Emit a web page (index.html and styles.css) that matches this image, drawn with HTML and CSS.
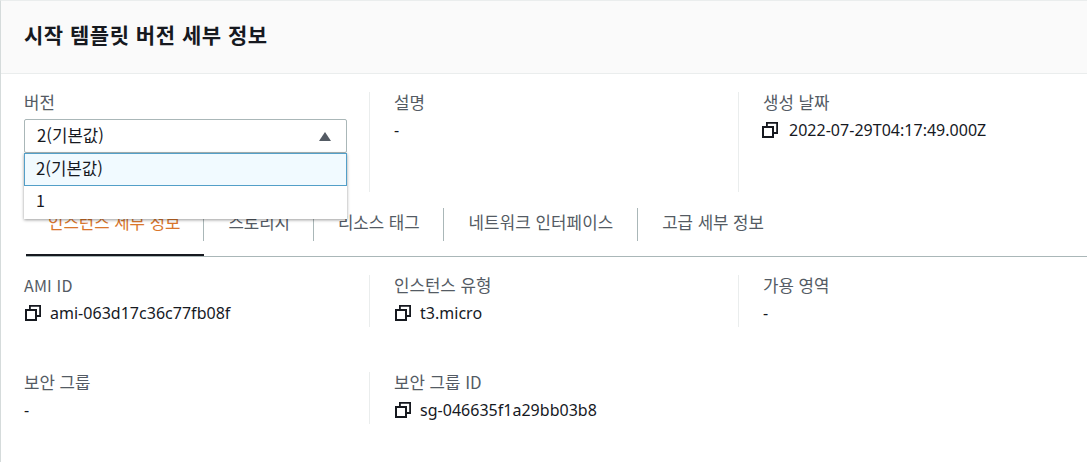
FILE: index.html
```html
<!DOCTYPE html>
<html lang="ko">
<head>
    <meta charset="UTF-8">
    <title>시작 템플릿 버전 세부 정보</title>
    <link rel="stylesheet" href="styles.css">
</head>
<body>
    <svg class="defs" width="0" height="0">
        <symbol id="copy" viewBox="0 0 16 16">
            <path d="M4.9 5V.9h10.2V11H11" fill="none" stroke="#16191f" stroke-width="1.8"/>
            <rect x="1" y="5" width="10" height="10" fill="none" stroke="#16191f" stroke-width="2"/>
        </symbol>
    </svg>

    <div class="panel">
        <div class="panel-header">
            <h2>시작 템플릿 버전 세부 정보</h2>
        </div>

        <div class="summary">
            <div class="col">
                <div class="label ko">버전</div>
                <div class="select-wrap">
                    <div class="select-trigger">
                        <span class="ko">2(기본값)</span>
                        <span class="caret"></span>
                    </div>
                    <ul class="select-menu">
                        <li class="selected ko">2(기본값)</li>
                        <li>1</li>
                    </ul>
                </div>
            </div>
            <div class="col">
                <div class="label ko">설명</div>
                <div class="value">-</div>
            </div>
            <div class="col">
                <div class="label ko">생성 날짜</div>
                <div class="value"><svg class="icon"><use href="#copy"/></svg>2022-07-29T04:17:49.000Z</div>
            </div>
        </div>

        <div class="tabs">
            <div class="tab active"><span>인스턴스 세부 정보</span></div>
            <div class="tab"><span>스토리지</span></div>
            <div class="tab"><span>리소스 태그</span></div>
            <div class="tab wide"><span>네트워크 인터페이스</span></div>
            <div class="tab"><span>고급 세부 정보</span></div>
        </div>

        <div class="details">
            <div class="col">
                <div class="label">AMI ID</div>
                <div class="value"><svg class="icon"><use href="#copy"/></svg>ami-063d17c36c77fb08f</div>
            </div>
            <div class="col">
                <div class="label ko">인스턴스 유형</div>
                <div class="value"><svg class="icon"><use href="#copy"/></svg>t3.micro</div>
            </div>
            <div class="col">
                <div class="label ko">가용 영역</div>
                <div class="value">-</div>
            </div>
            <div class="col">
                <div class="label ko">보안 그룹</div>
                <div class="value">-</div>
            </div>
            <div class="col">
                <div class="label ko">보안 그룹 ID</div>
                <div class="value"><svg class="icon"><use href="#copy"/></svg>sg-046635f1a29bb03b8</div>
            </div>
        </div>
    </div>
</body>
</html>
```

FILE: styles.css
```css
* {
    margin: 0;
    padding: 0;
    box-sizing: border-box;
}

html, body {
    height: 100%;
    overflow: hidden;
}

body {
    font-family: "Noto Sans CJK KR", "Noto Sans", sans-serif;
    font-size: 16px;
    line-height: 22px;
    letter-spacing: 0.17px;
    color: #16191f;
    background: #fff;
}

.defs {
    position: absolute;
}

.ko {
    font-size: 16.8px;
    letter-spacing: 0;
}

.panel {
    height: 462px;
    border-top: 1px solid #eaeded;
    border-left: 1px solid #d5dbdb;
}

.panel-header {
    height: 73px;
    padding: 20px 23px 0;
    background: #fafafa;
    border-bottom: 1px solid #eaeded;
}

.panel-header h2 {
    font-size: 21px;
    line-height: 26px;
    letter-spacing: 0.5px;
    font-weight: 700;
}

.summary,
.details {
    display: grid;
    grid-template-columns: 368px 369px 1fr;
}

.summary {
    padding-top: 18px;
}

.summary .col {
    height: 100px;
}

.col {
    padding: 0 22px 0 24px;
    border-left: 1px solid #eaeded;
}

.col:first-child,
.details .col:nth-child(4) {
    padding-left: 23px;
    border-left: none;
}

.label {
    margin: -1px 0 6px;
    color: #545b64;
}

.value {
    display: flex;
    align-items: center;
    font-family: "Noto Sans", "Noto Sans CJK KR", sans-serif;
    letter-spacing: 0.02px;
}

.icon {
    width: 16px;
    height: 16px;
    margin: 0 9px 0 1px;
    flex-shrink: 0;
}

.summary .icon {
    margin: 0 11px 0 -1px;
}

.select-wrap {
    position: relative;
}

.select-trigger {
    display: flex;
    justify-content: space-between;
    align-items: center;
    height: 34px;
    padding: 0 15px 3px 12px;
    border: 1px solid #aab7b8;
    border-radius: 2px;
    background: #fff;
}

.caret {
    width: 0;
    height: 0;
    margin-top: 3px;
    border-left: 6.5px solid transparent;
    border-right: 6.5px solid transparent;
    border-bottom: 9px solid #545b64;
}

.select-menu {
    position: absolute;
    top: 34px;
    left: 0;
    right: 0;
    list-style: none;
    background: #fff;
    box-shadow: 0 1px 3px rgba(0, 0, 0, 0.4);
    z-index: 2;
}

.select-menu li {
    height: 33px;
    padding: 3px 12px;
}

.select-menu .selected {
    background: #f1faff;
    border: 1px solid #539fc8;
    padding: 3px 11px;
}

.tabs {
    display: flex;
    height: 49px;
    margin: 16px 0 0 25px;
    border-bottom: 1px solid #aab7b8;
}

.tab {
    height: 33px;
    color: #545b64;
}

.tab span {
    display: block;
    height: 33px;
    padding: 0 23px 0 24px;
    border-right: 1px solid #aab7b8;
    font-size: 16.8px;
    line-height: 28px;
    letter-spacing: -0.05px;
}

.tab:first-child span {
    padding-left: 22px;
}

.tab.wide span {
    padding: 0 24px 0 25px;
    letter-spacing: 0.1px;
}

.tab:last-child span {
    border-right: none;
}

.tab.active {
    color: #d9762c;
    height: 48px;
    border-bottom: 2px solid #16191f;
}

.details {
    padding-top: 18px;
    row-gap: 45px;
}

.details .col {
    height: 52px;
}
```
